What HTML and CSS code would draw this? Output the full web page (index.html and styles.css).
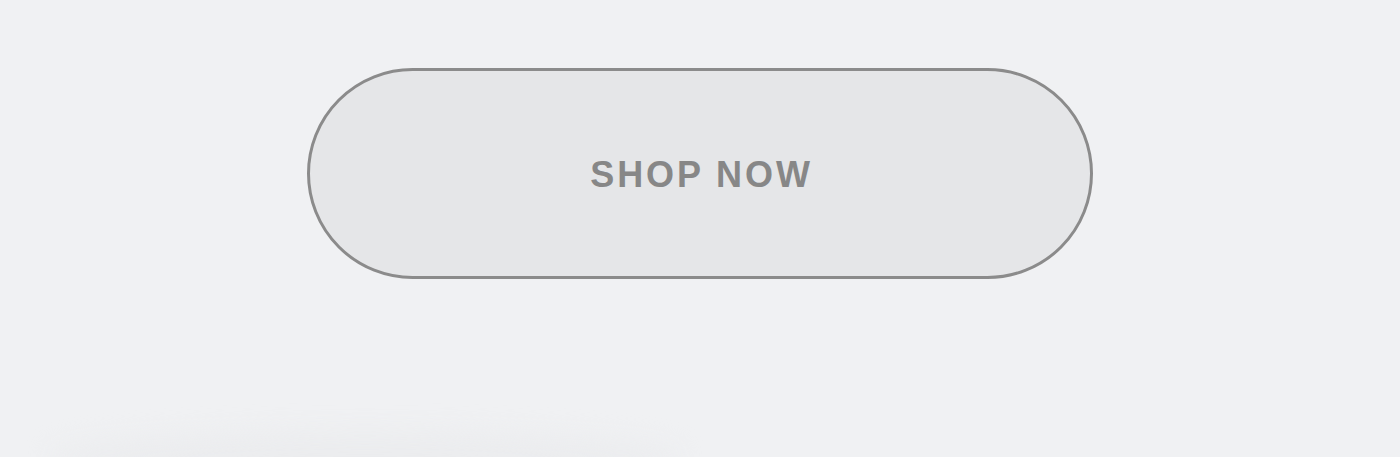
FILE: index.html
```html
<!DOCTYPE html>
<html lang="en">
<head>
<meta charset="utf-8">
<title>Shop</title>
<link rel="stylesheet" href="styles.css">
</head>
<body>
  <main class="page">
    <section class="cta">
      <button class="cta-button" type="button">SHOP NOW</button>
    </section>
    <div class="floor-shadow"></div>
  </main>
</body>
</html>
```

FILE: styles.css
```css
* { box-sizing: border-box; }

html, body {
  margin: 0;
  padding: 0;
  background: #f0f1f3;
  height: 100%;
  overflow: hidden;
}

.page {
  display: flex;
  flex-direction: column;
  align-items: center;
  height: 457px;
  position: relative;
  overflow: hidden;
}

.cta {
  padding-top: 68px;
  display: flex;
  justify-content: center;
  width: 100%;
}

.cta-button {
  width: 786px;
  height: 211px;
  border: 3px solid #8b8b8b;
  border-radius: 106px;
  background: #e5e6e8;
  color: #878787;
  font-family: "Liberation Sans", Arial, sans-serif;
  font-weight: 700;
  font-size: 36px;
  letter-spacing: 2.9px;
  padding: 2px 0 0 3px;
  cursor: pointer;
}

/* soft ground shadow along the bottom edge */
.floor-shadow {
  position: absolute;
  left: 50px;
  width: 630px;
  top: 432px;
  height: 50px;
  border-radius: 50%;
  background: #ebecee;
  filter: blur(12px);
}
```
